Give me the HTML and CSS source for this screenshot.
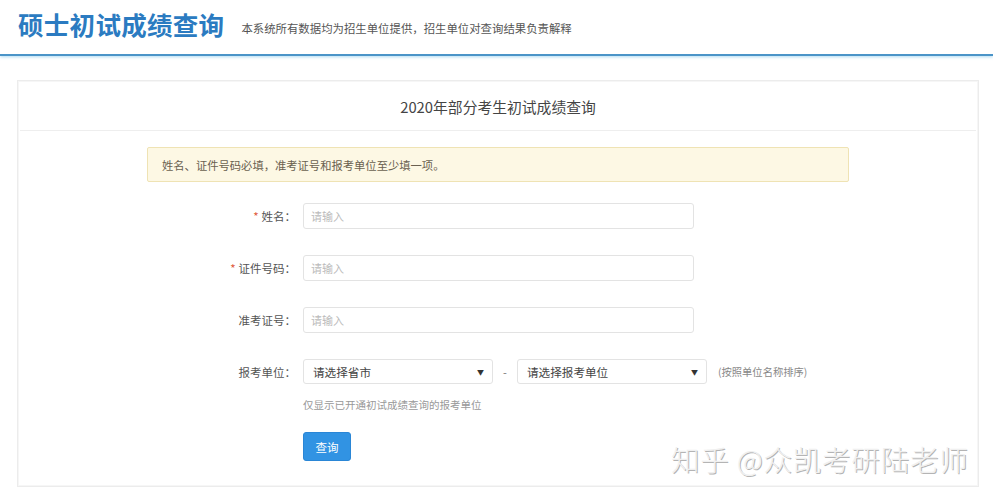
FILE: index.html
```html
<!DOCTYPE html>
<html lang="zh-CN">
<head>
<meta charset="utf-8">
<title>硕士初试成绩查询</title>
<link rel="stylesheet" href="styles.css">
</head>
<body>
<header class="top">
  <h1 class="brand">硕士初试成绩查询</h1>
  <span class="tagline">本系统所有数据均为招生单位提供，招生单位对查询结果负责解释</span>
</header>
<main class="main">
  <section class="card">
    <div class="card-head">2020年部分考生初试成绩查询</div>
    <div class="card-body">
      <div class="alert">姓名、证件号码必填，准考证号和报考单位至少填一项。</div>
      <form class="form">
        <div class="row">
          <label class="label"><span class="req">*</span>姓名：</label>
          <div class="input">请输入</div>
        </div>
        <div class="row">
          <label class="label"><span class="req">*</span>证件号码：</label>
          <div class="input">请输入</div>
        </div>
        <div class="row">
          <label class="label">准考证号：</label>
          <div class="input">请输入</div>
        </div>
        <div class="row row-sel">
          <label class="label">报考单位：</label>
          <div class="select"><span>请选择省市</span><span class="arrow">▼</span></div>
          <span class="dash">-</span>
          <div class="select"><span>请选择报考单位</span><span class="arrow">▼</span></div>
          <span class="note">(按照单位名称排序)</span>
        </div>
        <div class="help">仅显示已开通初试成绩查询的报考单位</div>
        <div class="actions"><button type="button" class="btn">查询</button></div>
      </form>
    </div>
  </section>
</main>
<div class="watermark">知乎 @众凯考研陆老师</div>
</body>
</html>
```
FILE: styles.css
```css
html, body {
  margin: 0;
  padding: 0;
  background: #fff;
  font-family: "Noto Sans CJK SC", "Noto Sans", sans-serif;
  color: #555;
}
.top {
  height: 54px;
  display: flex;
  align-items: center;
  padding-left: 18px;
  border-bottom: 2px solid #4a94c8;
  box-shadow: 0 1px 3px rgba(120, 195, 235, 0.6);
}
.brand {
  margin: 0;
  font-size: 25.5px;
  font-weight: 700;
  color: #2b7bc1;
  letter-spacing: 0.3px;
  line-height: 1;
  margin-top: -6px;
}
.tagline {
  margin-left: 17px;
  font-size: 11.4px;
  color: #555;
  margin-top: 2px;
}
.main {
  padding: 24px 14px 0 17px;
}
.card {
  border: 1px solid #ececec;
  box-shadow: 0 0 0 1px #f6f6f6 inset;
}
.card-head {
  height: 47px;
  margin: 2px 2px 0;
  border-bottom: 1px solid #eeeeee;
  display: flex;
  align-items: center;
  justify-content: center;
  font-size: 14.8px;
  color: #444;
}
.card-body {
  padding: 16px 0 25px;
}
.alert {
  width: 686px;
  margin: 0 auto;
  height: 33px;
  display: flex;
  align-items: center;
  padding-left: 14px;
  background: #fdf8e4;
  border: 1px solid #efe3b4;
  border-radius: 2px;
  font-size: 11.3px;
  color: #6a6150;
}
.form {
  margin-left: 130px;
  padding-top: 21px;
}
.row {
  display: flex;
  align-items: center;
  margin-bottom: 26px;
}
.row-sel {
  margin-bottom: 13px;
}
.label {
  width: 155px;
  padding-right: 7px;
  box-sizing: border-box;
  text-align: right;
  font-size: 11.5px;
  color: #555;
}
.req {
  color: #e05a3a;
  margin-right: 3px;
}
.input {
  width: 391px;
  height: 26px;
  box-sizing: border-box;
  border: 1px solid #e3e3e3;
  border-radius: 3px;
  padding-left: 7px;
  display: flex;
  align-items: center;
  font-size: 11px;
  color: #bbb;
}
.select {
  width: 190px;
  height: 25px;
  box-sizing: border-box;
  border: 1px solid #e3e3e3;
  border-radius: 3px;
  padding: 0 8px 0 9px;
  display: flex;
  align-items: center;
  justify-content: space-between;
  font-size: 11.6px;
  color: #444;
}
.arrow {
  font-size: 7px;
  color: #333;
}
.dash {
  width: 24px;
  text-align: center;
  font-size: 11px;
  color: #777;
}
.note {
  margin-left: 11px;
  font-size: 10.3px;
  color: #888;
}
.help {
  margin-left: 155px;
  font-size: 10.5px;
  color: #999;
}
.actions {
  margin-left: 155px;
  margin-top: 20px;
}
.btn {
  width: 48px;
  height: 29px;
  border: 1px solid #2a86d6;
  border-radius: 3px;
  background: #3193e3;
  color: #fff;
  font-family: inherit;
  font-size: 11.5px;
  padding: 0;
}
.watermark {
  position: absolute;
  left: 671px;
  top: 438px;
  font-size: 28.5px;
  letter-spacing: 0.8px;
  color: #f0f0f0;
  font-weight: 300;
  text-shadow: 1px 1px 0 #b4b4b4, -1px -1px 0 #fff;
}
```
